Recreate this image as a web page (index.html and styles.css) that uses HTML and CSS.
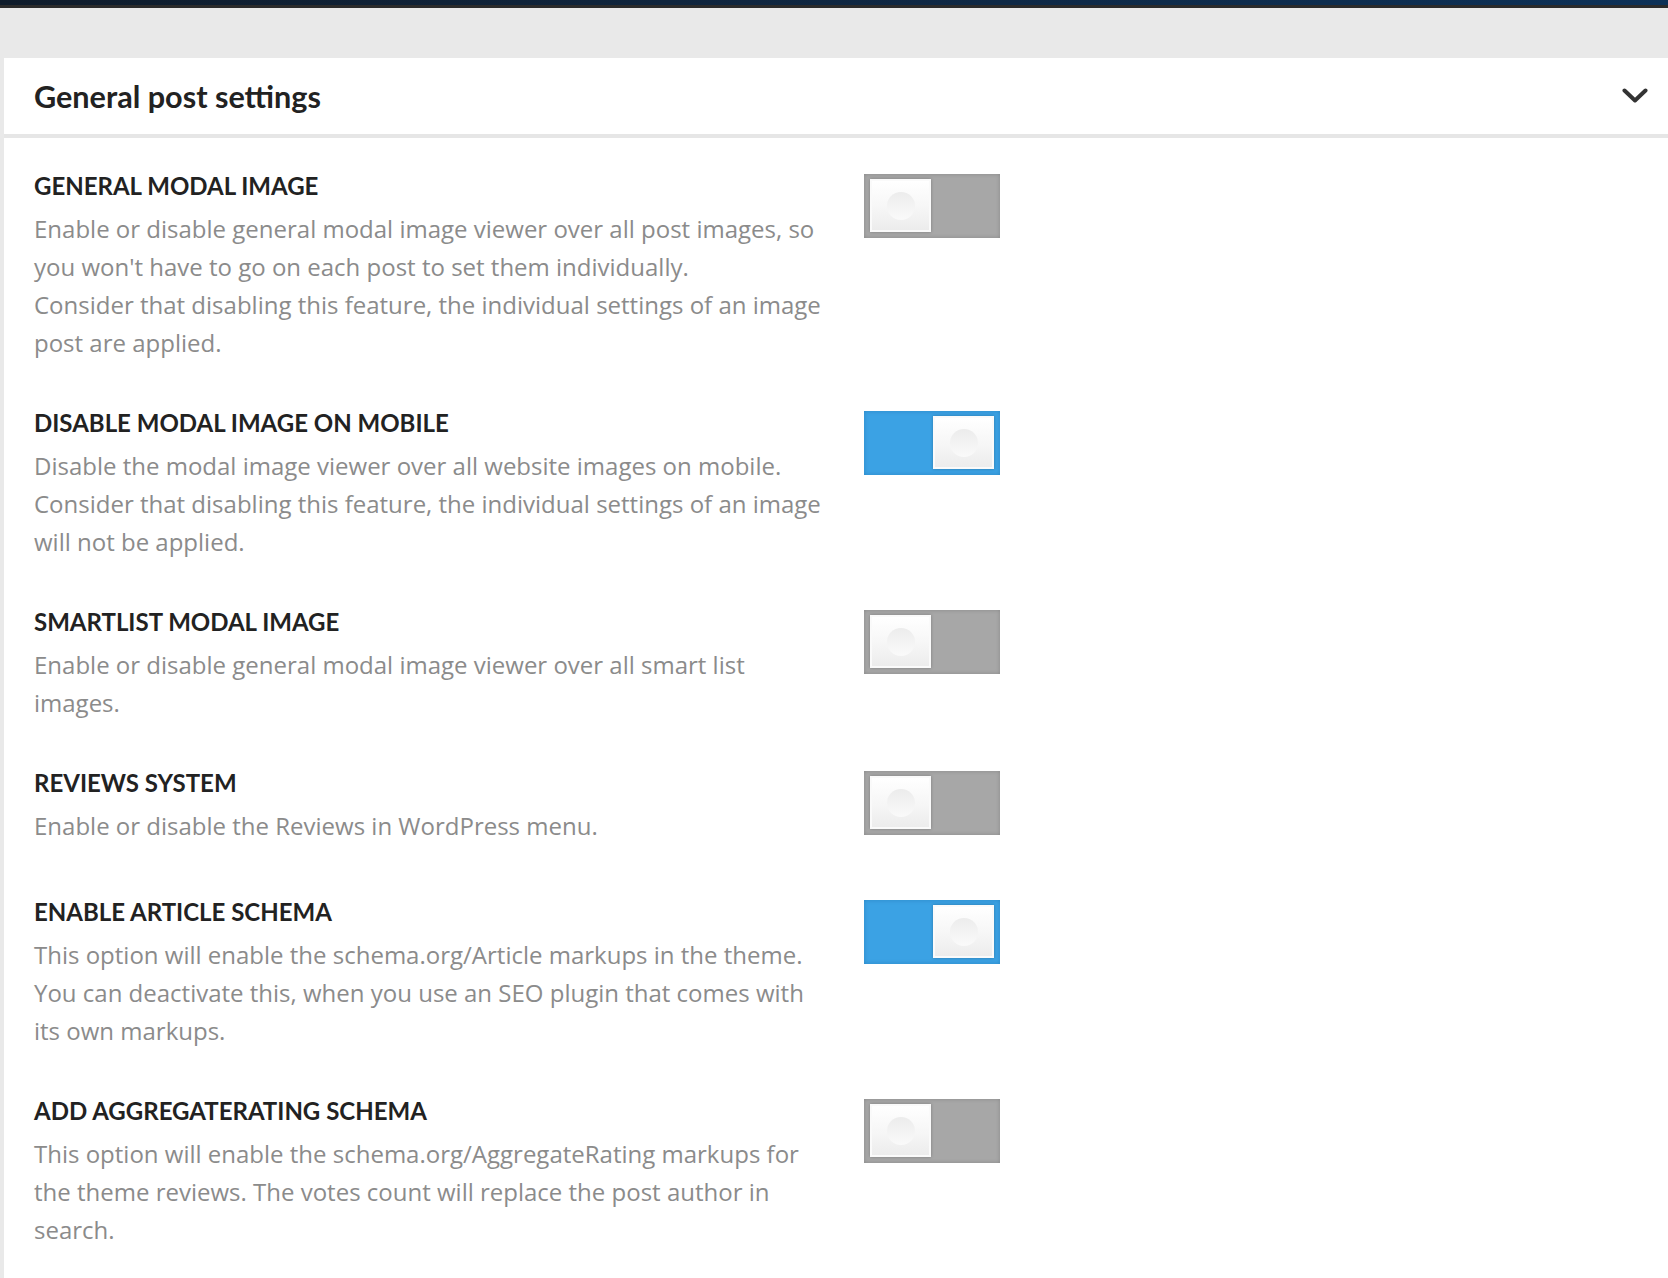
FILE: index.html
```html
<!DOCTYPE html>
<html lang="en">
<head>
  <meta charset="UTF-8">
  <title>General post settings</title>
  <link rel="stylesheet" href="styles.css">
</head>
<body>

<div class="topbar"></div>

<div class="wrap">
  <div class="panel">
    <div class="panel-head">
      <h2>General post settings</h2>
      <svg class="chevron" width="26" height="16" viewBox="0 0 26 16">
        <path d="M2.5 2.5 L13 12.5 L23.5 2.5" fill="none" stroke="#333" stroke-width="4" stroke-linecap="round" stroke-linejoin="round"/>
      </svg>
    </div>

    <div class="panel-body">
      <div class="option">
        <div class="text">
          <h4>GENERAL MODAL IMAGE</h4>
          <p>Enable or disable general modal image viewer over all post images, so you won't have to go on each post to set them individually.<br>Consider that disabling this feature, the individual settings of an image post are applied.</p>
        </div>
        <div class="switch"><span class="knob"></span></div>
      </div>

      <div class="option">
        <div class="text">
          <h4>DISABLE MODAL IMAGE ON MOBILE</h4>
          <p>Disable the modal image viewer over all website images on mobile.<br>Consider that disabling this feature, the individual settings of an image will not be applied.</p>
        </div>
        <div class="switch on"><span class="knob"></span></div>
      </div>

      <div class="option">
        <div class="text">
          <h4>SMARTLIST MODAL IMAGE</h4>
          <p>Enable or disable general modal image viewer over all smart list images.</p>
        </div>
        <div class="switch"><span class="knob"></span></div>
      </div>

      <div class="option">
        <div class="text">
          <h4>REVIEWS SYSTEM</h4>
          <p>Enable or disable the Reviews in WordPress menu.</p>
        </div>
        <div class="switch"><span class="knob"></span></div>
      </div>

      <div class="option">
        <div class="text">
          <h4>ENABLE ARTICLE SCHEMA</h4>
          <p>This option will enable the schema.org/Article markups in the theme.<br>You can deactivate this, when you use an SEO plugin that comes with its own markups.</p>
        </div>
        <div class="switch on"><span class="knob"></span></div>
      </div>

      <div class="option">
        <div class="text">
          <h4>ADD AGGREGATERATING SCHEMA</h4>
          <p>This option will enable the schema.org/AggregateRating markups for the theme reviews. The votes count will replace the post author in search.</p>
        </div>
        <div class="switch"><span class="knob"></span></div>
      </div>
    </div>
  </div>
</div>

</body>
</html>
```

FILE: styles.css
```css
body { margin: 0; background: #e9e9e9; font-family: "Open Sans", sans-serif; }

.topbar { height: 5px; background: linear-gradient(90deg, #0f1c2b 0%, #10253d 40%, #0d3157 100%); border-bottom: 3px solid #2b2b2b; }

.wrap { padding: 50px 0 0 4px; }
.panel { background: #fff; min-height: 1220px; }

.panel-head { height: 76px; display: flex; align-items: center; justify-content: space-between; padding: 0 20px 0 30px; border-bottom: 4px solid #e6e6e6; }
.panel-head h2 { margin: 0; font-family: Lato, sans-serif; font-size: 30.6px; font-weight: 700; color: #222; }
.chevron { display: block; }

.panel-body { padding: 36px 0 0 30px; }

.option { display: flex; align-items: flex-start; gap: 34px; padding-bottom: 49px; }
.option .text { width: 796px; }
.option h4 { margin: -2px 0 10px; font-family: Lato, sans-serif; font-size: 24px; line-height: 28px; font-weight: 700; color: #222; }
.option p { margin: 0; font-size: 24px; line-height: 38px; color: #8b8b8b; }

.switch { width: 136px; height: 64px; box-sizing: border-box; padding: 5px 6px; background: #a7a7a7; box-shadow: inset 0 0 4px rgba(0,0,0,0.18); margin-bottom: 16px; display: flex; }
.switch.on { background: #3ba2e4; justify-content: flex-end; box-shadow: inset 0 0 4px rgba(0,60,110,0.25); }
.knob { width: 61px; height: 53px; box-sizing: border-box; border: 2px solid #fafafa; background: linear-gradient(#fff, #f6f6f6 55%, #ececec); box-shadow: 0 0 3px rgba(0,0,0,0.25); display: flex; align-items: center; justify-content: center; }
.knob::after { content: ""; width: 28px; height: 28px; border-radius: 50%; background: linear-gradient(#ececec, #fafafa); }
```
